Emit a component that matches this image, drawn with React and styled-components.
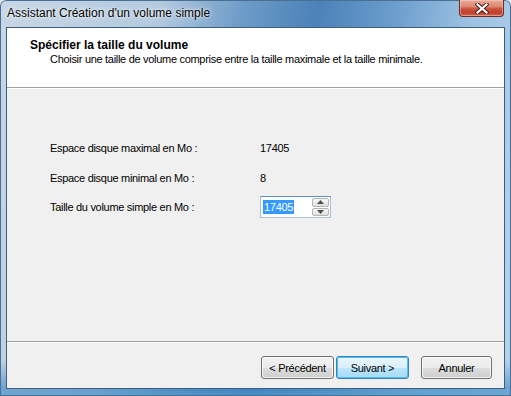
import React from "react";
import styled, { createGlobalStyle } from "styled-components";

const GlobalStyle = createGlobalStyle`
  html, body {
    margin: 0;
    padding: 0;
    background: #dfe8f1;
  }
  body {
    font-family: "Liberation Sans", Arial, sans-serif;
  }
`;

// Aero window frame
const Window = styled.div`
  width: 511px;
  height: 396px;
  box-sizing: border-box;
  display: flex;
  flex-direction: column;
  padding: 0 6px 7px 6px;
  border-radius: 6px 6px 0 0;
  background:
    linear-gradient(100deg, rgba(255,255,255,0) 0%, rgba(255,255,255,0) 100%),
    linear-gradient(
      180deg,
      rgba(255,255,255,0) 0px,
      rgba(255,255,255,0) 360px,
      rgba(60,130,190,0.6) 388px,
      rgba(70,150,205,0.7) 396px
    ),
    linear-gradient(
      100deg,
      #c8d7e6 0%,
      #b2c9df 28%,
      #6d9cc8 42%,
      #4b82b8 55%,
      #6a9dcc 68%,
      #9fc3e3 82%,
      #b8d4ec 100%
    );
  box-shadow: inset 0 0 0 1px #4a6f93;
`;

const TitleBar = styled.div`
  height: 27px;
  display: flex;
  justify-content: space-between;
  align-items: flex-start;
`;

const Title = styled.span`
  margin: 6px 0 0 1px;
  font-size: 12px;
  line-height: 14px;
  color: #000;
  text-shadow: 0 0 6px rgba(255, 255, 255, 0.9), 0 0 2px rgba(255, 255, 255, 0.9);
`;

const CloseButton = styled.div`
  width: 45px;
  height: 17px;
  margin-right: 1px;
  box-sizing: border-box;
  display: flex;
  align-items: center;
  justify-content: center;
  border: 1px solid #6e2e27;
  border-top: none;
  border-radius: 0 0 4px 4px;
  background: linear-gradient(180deg, #e9a897 0%, #dc8a74 40%, #c9533d 55%, #c0402c 80%, #d4654c 100%);
  box-shadow: inset 0 0 0 1px rgba(255, 220, 210, 0.45);
`;

const Client = styled.div`
  flex: 1;
  display: flex;
  flex-direction: column;
  border: 1px solid #3f5d7c;
  background: #f0f0f0;
  font-size: 11px;
  letter-spacing: -0.3px;
  color: #000;
`;

const Header = styled.div`
  height: 59px;
  box-sizing: border-box;
  padding: 10px 0 0 23px;
  background: #fff;
  display: flex;
  flex-direction: column;
`;

const HeaderTitle = styled.div`
  font-size: 12px;
  font-weight: bold;
  letter-spacing: 0;
  line-height: 14px;
`;

const HeaderText = styled.div`
  margin: 0 0 0 20px;
  line-height: 14px;
`;

const Divider = styled.div`
  height: 0;
  border-top: 1px solid #a0a0a0;
  border-bottom: 1px solid #ffffff;
`;

const Body = styled.div`
  flex: 1;
  padding: 48px 0 0 43px;
  display: grid;
  grid-template-columns: 210px auto;
  grid-auto-rows: 22px;
  row-gap: 7.5px;
  align-content: start;
  align-items: center;
`;

const Label = styled.span`
  line-height: 14px;
`;

const Value = styled.span`
  line-height: 14px;
`;

const SpinBox = styled.div`
  width: 71px;
  height: 22px;
  box-sizing: border-box;
  display: flex;
  align-items: stretch;
  border: 1px solid #a7c1dc;
  border-top-color: #5e8fc0;
  background: #fff;
  padding: 1px;
`;

const SpinInput = styled.div`
  flex: 1;
  display: flex;
  align-items: center;
  padding-left: 1px;
`;

const Selected = styled.span`
  background: #3399ff;
  color: #fff;
  line-height: 14px;
  padding: 0 1px;
`;

const SpinButtons = styled.div`
  width: 17px;
  display: flex;
  flex-direction: column;
  gap: 1px;
`;

const SpinButton = styled.div`
  flex: 1;
  box-sizing: border-box;
  display: flex;
  align-items: center;
  justify-content: center;
  border: 1px solid #b4b4b4;
  border-radius: 2px;
  background: linear-gradient(180deg, #f7f7f7 0%, #ececec 50%, #dedede 100%);
`;

const Footer = styled.div`
  height: 45px;
  box-sizing: border-box;
  padding: 13px 12px 0 0;
  display: flex;
  justify-content: flex-end;
  align-items: flex-start;
`;

const Button = styled.div`
  width: ${(p) => p.$w || 73}px;
  height: 23px;
  box-sizing: border-box;
  margin-left: ${(p) => p.$gap || 0}px;
  display: flex;
  align-items: center;
  justify-content: center;
  border: 1px solid ${(p) => (p.$default ? "#3c7fb1" : "#707070")};
  border-radius: 3px;
  background: linear-gradient(
    180deg,
    ${(p) => (p.$default ? "#eaf6fd 0%, #d9f0fc 50%, #bee6fd 51%, #a7d9f5 100%" : "#f2f2f2 0%, #ebebeb 50%, #dddddd 51%, #cfcfcf 100%")}
  );
  box-shadow: inset 0 0 0 1px ${(p) => (p.$default ? "#48c2f7" : "rgba(255,255,255,0.7)")};
  line-height: 14px;
`;

const Arrow = ({ up }) => (
  <svg width="7" height="4" viewBox="0 0 7 4">
    <path d={up ? "M0 4 L3.5 0 L7 4 Z" : "M0 0 L3.5 4 L7 0 Z"} fill="#4d4d4d" />
  </svg>
);

const CloseIcon = () => (
  <svg width="14" height="11" viewBox="0 0 14 11">
    <path d="M2.5 1.5 L11.5 9.5 M11.5 1.5 L2.5 9.5" stroke="#4a1c18" strokeWidth="4.2" strokeLinecap="square" />
    <path d="M2.5 1.5 L11.5 9.5 M11.5 1.5 L2.5 9.5" stroke="#ffffff" strokeWidth="2.2" strokeLinecap="square" />
  </svg>
);

const App = () => {
  return (
    <>
      <GlobalStyle />
      <Window>
        <TitleBar>
          <Title>Assistant Création d'un volume simple</Title>
          <CloseButton>
            <CloseIcon />
          </CloseButton>
        </TitleBar>
        <Client>
          <Header>
            <HeaderTitle>Spécifier la taille du volume</HeaderTitle>
            <HeaderText>
              Choisir une taille de volume comprise entre la taille maximale et la taille minimale.
            </HeaderText>
          </Header>
          <Divider />
          <Body>
            <Label>Espace disque maximal en Mo :</Label>
            <Value>17405</Value>
            <Label>Espace disque minimal en Mo :</Label>
            <Value>8</Value>
            <Label>Taille du volume simple en Mo :</Label>
            <SpinBox>
              <SpinInput>
                <Selected>17405</Selected>
              </SpinInput>
              <SpinButtons>
                <SpinButton>
                  <Arrow up />
                </SpinButton>
                <SpinButton>
                  <Arrow />
                </SpinButton>
              </SpinButtons>
            </SpinBox>
          </Body>
          <Divider />
          <Footer>
            <Button>&lt; Précédent</Button>
            <Button $default $gap={2}>
              Suivant &gt;
            </Button>
            <Button $gap={12} $w={71}>
              Annuler
            </Button>
          </Footer>
        </Client>
      </Window>
    </>
  );
};

export default App;
